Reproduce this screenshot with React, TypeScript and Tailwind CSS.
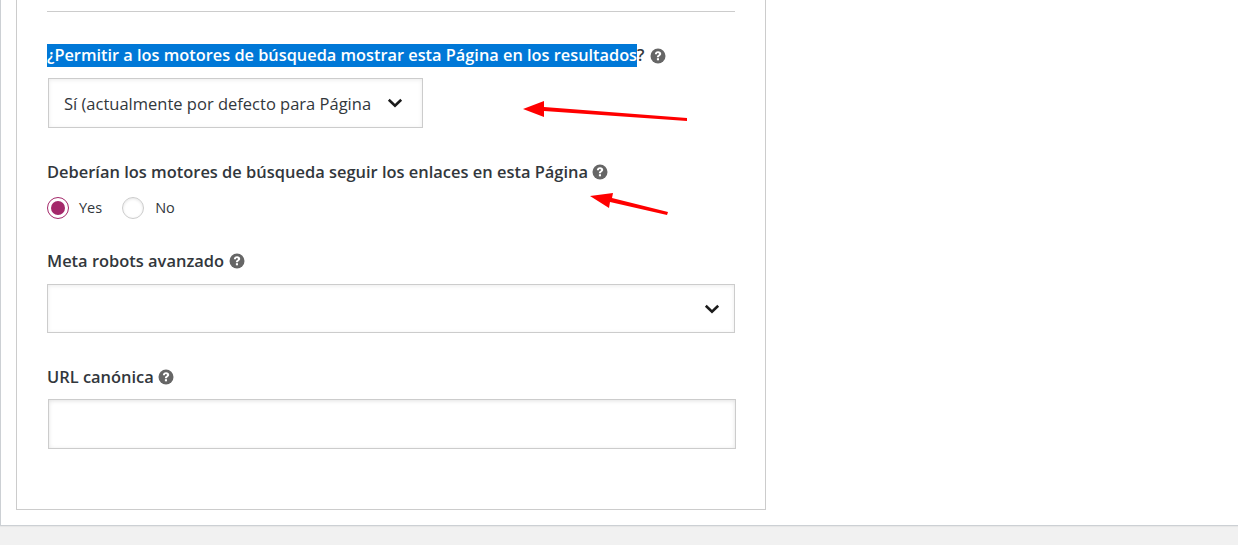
const HelpIcon = () => (
  <svg viewBox="0 0 16 16" className="h-[16px] w-[16px] shrink-0">
    <circle cx="8" cy="8" r="7.5" fill="#666" />
    <path
      d="M4.9 6.1c0-1.8 1.3-2.9 3.2-2.9 1.8 0 3.1 1.1 3.1 2.6 0 1.1-.6 1.7-1.4 2.2-.6.4-.8.7-.8 1.3H6.9c0-1.1.3-1.7 1.1-2.2.6-.4.9-.7.9-1.2s-.4-.8-.9-.8c-.6 0-1 .4-1 1.1H4.9z"
      fill="#fff"
    />
    <rect x="6.9" y="10.2" width="2.1" height="2.1" fill="#fff" />
  </svg>
);

const Chevron = () => (
  <svg viewBox="0 0 16 10" className="h-[10px] w-[16px]" fill="none">
    <path d="M1.8 1.8 8 7.6l6.2-5.8" stroke="#1b1b1b" strokeWidth="2.6" />
  </svg>
);

export default function App() {
  return (
    <div className="relative flex h-[545px] w-[1238px] flex-col overflow-hidden bg-[#f1f1f1] font-['Open_Sans','Noto_Sans',sans-serif] text-[#32373c]">
      <div className="h-[526px] border-b border-l border-[#ccd0d4] bg-white pl-[15px] shadow-[0_1px_1px_rgba(0,0,0,0.04)]">
        <div className="h-[510px] w-[750px] border-r border-b border-l border-[#cccccc] px-[30px]">
          <div className="h-[12px] border-b border-[#cccccc]" />

          <div className="mt-[32px] flex h-[24px] items-start text-[16.34px] leading-[22px] font-semibold">
            <span className="h-[23px] bg-[#0078d7] text-white">
              ¿Permitir a los motores de búsqueda mostrar esta Página en los resultados
            </span>
            <span>?</span>
            <span className="mt-[4px] ml-[5px]">
              <HelpIcon />
            </span>
          </div>

          <div className="mt-[10px] ml-[1px] flex h-[50px] w-[375px] items-center justify-between border border-[#cccccc] bg-white pr-[19px] pl-[15px] text-[16.5px] shadow-[inset_0_1px_4px_rgba(0,0,0,0.08)]">
            <span className="pt-[2px]">Sí (actualmente por defecto para Página</span>
            <Chevron />
          </div>

          <div className="mt-[33px] flex h-[24px] items-center gap-[4px] pb-[2px] text-[16.45px] font-semibold">
            <span>Deberían los motores de búsqueda seguir los enlaces en esta Página</span>
            <HelpIcon />
          </div>

          <div className="mt-[11px] flex h-[24px] items-center text-[14.5px]">
            <span className="flex h-[22px] w-[22px] items-center justify-center rounded-full border border-[#a4286a] bg-white">
              <span className="h-[14px] w-[14px] rounded-full bg-[#a4286a]" />
            </span>
            <span className="ml-[10px]">Yes</span>
            <span className="ml-[20px] h-[22px] w-[22px] rounded-full border border-[#cccccc] bg-white shadow-[inset_0_1px_3px_rgba(0,0,0,0.1)]" />
            <span className="ml-[11px]">No</span>
          </div>

          <div className="mt-[30px] flex h-[24px] items-center gap-[5px] pb-[2px] text-[16.45px] font-semibold">
            <span>Meta robots avanzado</span>
            <HelpIcon />
          </div>

          <div className="mt-[10px] flex h-[49px] w-[688px] items-center justify-end border border-[#cccccc] bg-white pr-[14px] shadow-[inset_0_1px_4px_rgba(0,0,0,0.08)]">
            <Chevron />
          </div>

          <div className="mt-[33px] flex h-[24px] items-center gap-[4px] pb-[2px] text-[16.45px] font-semibold">
            <span>URL canónica</span>
            <HelpIcon />
          </div>

          <div className="mt-[9px] ml-[1px] h-[50px] w-[688px] border border-[#cccccc] bg-white shadow-[inset_0_1px_4px_rgba(0,0,0,0.12)]" />
        </div>
      </div>

      {/* red annotation arrows drawn on top of the form */}
      <svg viewBox="0 0 166 24" width={166} height={24} className="absolute top-[100px] left-[523px]">
        <path d="M0 9 21 1 21 7 164 18 164 21 21 11 21 17Z" fill="#ff0000" />
      </svg>
      <svg viewBox="0 0 80 26" width={80} height={26} className="absolute top-[192px] left-[590px]">
        <path d="M0 4 23 1 22 6 78 20 77 23 20 10 19 16Z" fill="#ff0000" />
      </svg>
    </div>
  );
}
